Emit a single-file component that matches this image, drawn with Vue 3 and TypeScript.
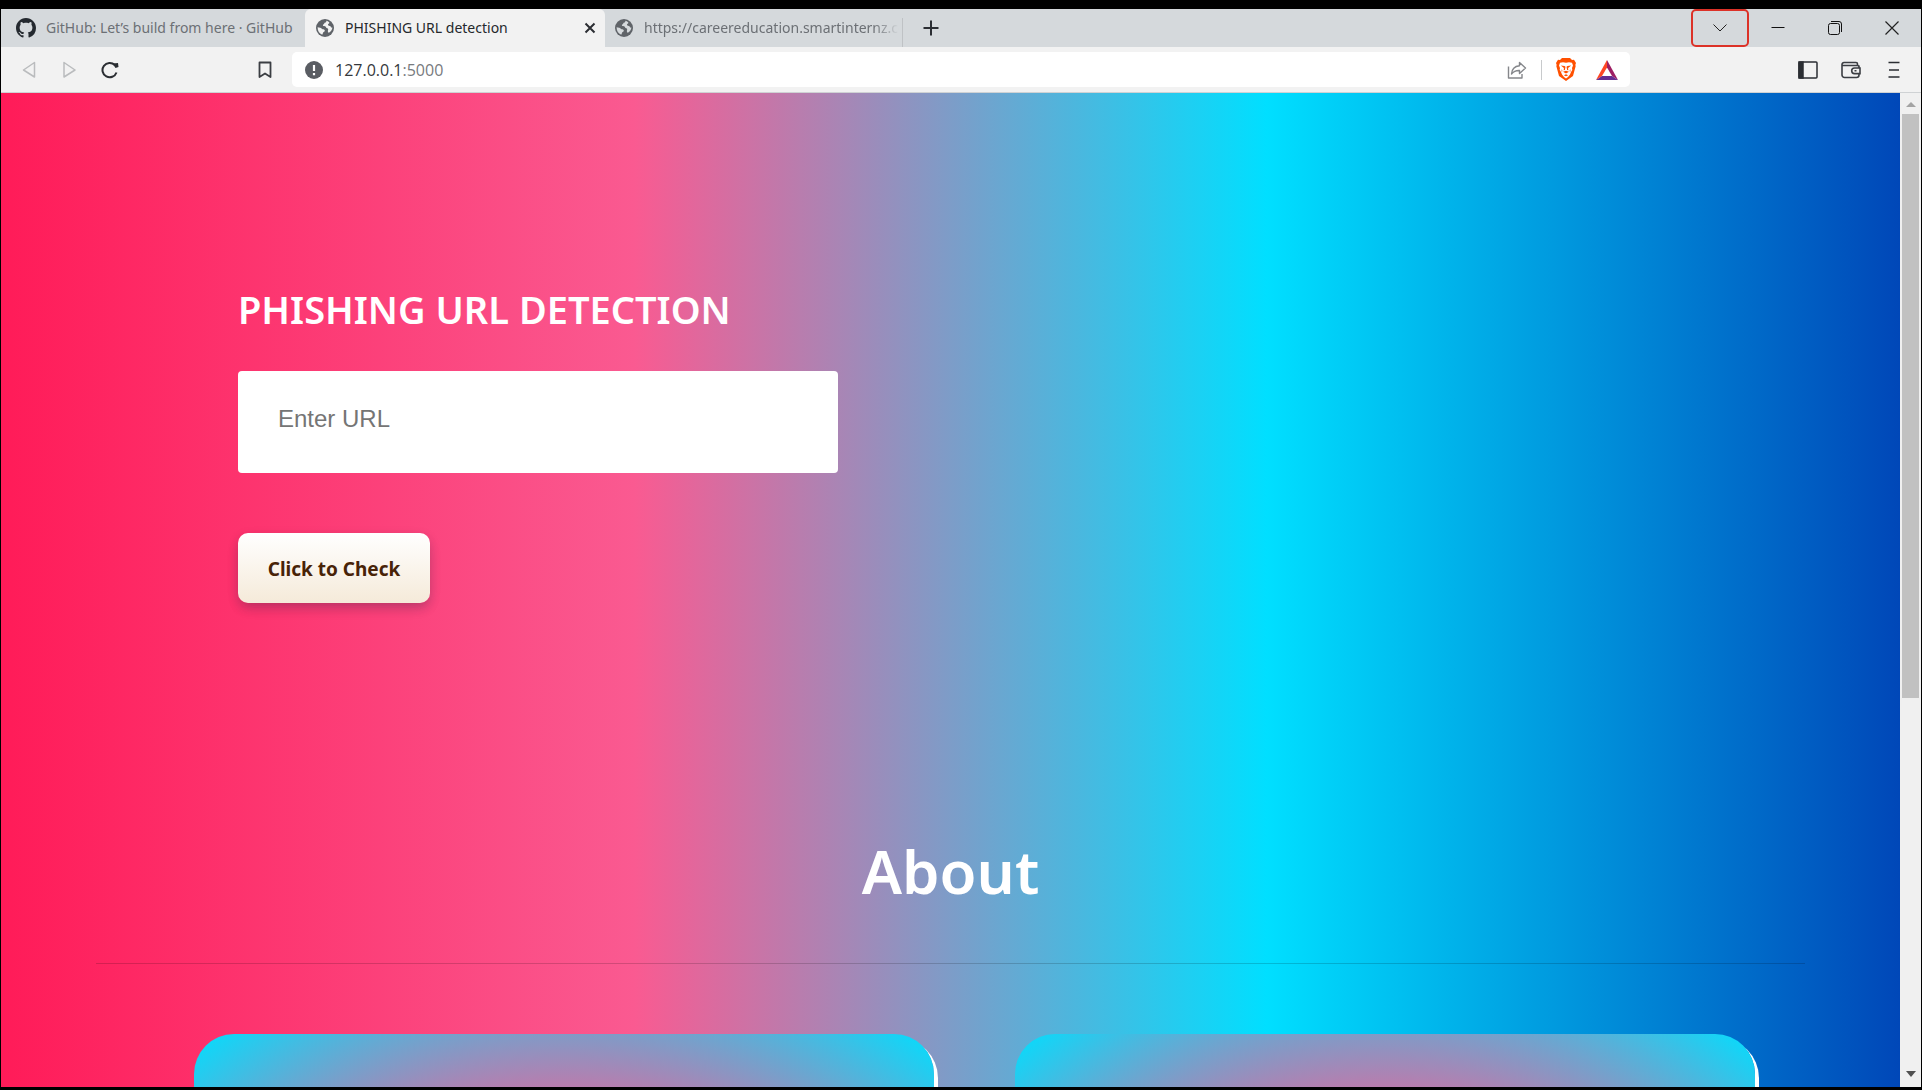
<script setup lang="ts">
import { ref } from 'vue'

interface Tab {
  title: string
  icon: 'github' | 'globe'
}

const tabs: Tab[] = [
  { title: 'GitHub: Let’s build from here · GitHub', icon: 'github' },
  { title: 'PHISHING URL detection', icon: 'globe' },
  { title: 'https://careereducation.smartinternz.com', icon: 'globe' },
]
const active = ref(1)
const url = ref('')
</script>

<template>
  <div class="window">
    <header class="tabstrip">
      <div class="tabs">
        <div v-for="(tab, i) in tabs" :key="tab.title" class="tab" :class="{ active: i === active }">
          <button class="tab-main" type="button" @click="active = i">
            <svg v-if="tab.icon === 'github'" class="fav" viewBox="0 0 16 16" fill="#24292f">
              <path d="M8 0C3.58 0 0 3.58 0 8c0 3.54 2.29 6.53 5.47 7.59.4.07.55-.17.55-.38 0-.19-.01-.82-.01-1.49-2.01.37-2.53-.49-2.69-.94-.09-.23-.48-.94-.82-1.13-.28-.15-.68-.52-.01-.53.63-.01 1.08.58 1.23.82.72 1.21 1.87.87 2.33.66.07-.52.28-.87.51-1.07-1.78-.2-3.64-.89-3.64-3.95 0-.87.31-1.59.82-2.15-.08-.2-.36-1.02.08-2.12 0 0 .67-.21 2.2.82.64-.18 1.32-.27 2-.27s1.36.09 2 .27c1.53-1.04 2.2-.82 2.2-.82.44 1.1.16 1.92.08 2.12.51.56.82 1.27.82 2.15 0 3.07-1.87 3.75-3.65 3.95.29.25.54.73.54 1.48 0 1.07-.01 1.93-.01 2.2 0 .21.15.46.55.38A8.01 8.01 0 0 0 16 8c0-4.42-3.58-8-8-8z" />
            </svg>
            <svg v-else class="fav" viewBox="0 0 20 20">
              <circle cx="10" cy="10" r="9" fill="#5f6368" />
              <path d="M2.6 9.2c2 .2 3.3.5 4.2 1.5.9.9 2.2.3 2.8 1.2.6.9-.2 1.7-1 2.2-.8.5-.6 1.8-1.4 2.6C4.300 15.500 2.500 13 2.600 9.200zM11.300 2.700c.2 1-.2 1.700-1.100 1.900-1 .2-.7 1.200-1.500 1.600-.7.4-1 .9-.6 1.500.5.6 1.700.1 2.400.7.8.7.6 1.700 1.700 1.900 1 .2 1.200 1 .8 1.900-.4 1.100.1 2.200.9 2.600 2-1.200 3.400-3 3.500-5.200-1 .2-1.500-.3-1.800-1.100-.4-.9-1.400-.6-2.200-1.100-.6-.5-.5-1.300.2-1.600.7-.3.8-.9.6-1.600-.9-.8-1.800-1.200-2.900-1.500z" :fill="i === active ? '#f2f2f2' : '#d5d9dc'" />
            </svg>
            <span class="tab-title">{{ tab.title }}</span>
          </button>
          <button v-if="i === active" class="tab-close" type="button" aria-label="Close tab">
            <svg width="12" height="12" viewBox="0 0 12 12" stroke="#2b2e33" stroke-width="2"><path d="M1.500 1.500l9 9M10.500 1.500l-9 9" /></svg>
          </button>
        </div>
      </div>
      <button class="new-tab" type="button" aria-label="New tab">
        <svg width="16" height="16" viewBox="0 0 16 16" stroke="#2b2e33" stroke-width="2"><path d="M8 .5v15M.5 8h15" /></svg>
      </button>
      <div class="win-controls">
        <button class="search-tabs" type="button" aria-label="Search tabs">
          <svg width="14" height="8" viewBox="0 0 14 8" fill="none" stroke="#222"><path d="M.5.500L7 7 13.500.500" /></svg>
        </button>
        <button type="button" aria-label="Minimize">
          <svg width="14" height="14" viewBox="0 0 14 14" stroke="#111"><path d="M.5 6.500h13" /></svg>
        </button>
        <button type="button" aria-label="Restore">
          <svg width="14" height="14" viewBox="0 0 14 14" fill="none" stroke="#111"><rect x=".5" y="2.500" width="11" height="11" rx="2" /><path d="M3 .500h8a2.500 2.500 0 0 1 2.500 2.500v8" /></svg>
        </button>
        <button type="button" aria-label="Close">
          <svg width="14" height="14" viewBox="0 0 14 14" stroke="#222" stroke-width="1.200"><path d="M.5.500l13 13M13.500.500l-13 13" /></svg>
        </button>
      </div>
    </header>

    <nav class="toolbar">
      <div class="nav-left">
        <button type="button" aria-label="Back">
          <svg width="16" height="18" viewBox="0 0 16 18" fill="none" stroke="#babcbe" stroke-width="1.500" stroke-linejoin="round"><path d="M13.500 1.500v14.500L2.500 9z" /></svg>
        </button>
        <button type="button" aria-label="Forward">
          <svg width="16" height="18" viewBox="0 0 16 18" fill="none" stroke="#babcbe" stroke-width="1.500" stroke-linejoin="round"><path d="M3 1.500v14.500l11-7z" /></svg>
        </button>
        <button type="button" aria-label="Reload">
          <svg width="18" height="18" viewBox="0 0 18 18" fill="none" stroke="#2b2e33" stroke-width="2"><path d="M13.800 4A7.200 7.200 0 1 0 15.500 11.500" /><path d="M11.500 2.500l5.500-.5.500 4-3 1z" fill="#2b2e33" stroke="none" /></svg>
        </button>
      </div>
      <button class="bookmark" type="button" aria-label="Bookmark">
        <svg width="14" height="18" viewBox="0 0 14 18" fill="none" stroke="#3b3e43" stroke-width="1.800" stroke-linejoin="round"><path d="M1.500 1.500h11v14.500L7 12.500 1.500 16z" /></svg>
      </button>
      <div class="address">
        <svg width="18" height="18" viewBox="0 0 18 18"><circle cx="9" cy="9" r="9" fill="#5a5d63" /><path d="M9 4v6M9 12v2.200" stroke="#fff" stroke-width="2.200" /></svg>
        <span class="url"><b>127.0.0.1</b>:5000</span>
        <button type="button" aria-label="Share">
          <svg width="20" height="18" viewBox="0 0 20 18" fill="none" stroke="#85878b" stroke-width="1.400" stroke-linejoin="round"><path d="M1.500 5.500v11.500h13.500v-4" /><path d="M12.500 1.500l6 5.500-6 5.500V9.500c-3.500-.2-6 1-8 3.500.3-4.500 3-7.800 8-8.300z" /></svg>
        </button>
        <i class="rule"></i>
        <button class="brave" type="button" aria-label="Brave Shields">
          <svg width="20" height="23" viewBox="0 0 20 23"><path d="M6 0h8l2 2 2-.2L20 5l-.7 2 .4 1-2.700 10L10 23 3 18 .3 8l.4-1L0 5l2-3.200L4 2z" fill="#ff5000" /><path d="M4 4.800l3-.6 3 .6 3-.6 3 .6 1 2.700-1 2.500.3 2-1.300 2-1 2.500-2 2.500-2 1.500-2-1.500-2-2.500-1-2.500-1.300-2 .3-2-1-2.500z" fill="#fff" /><path d="M4.800 7.500l3.700.4 1 .9-.6 3.200-1.200.3.200-2.300zM15.200 7.500l-3.700.4-1 .9.600 3.200 1.200.3-.2-2.300zM7 13.800l3-1 3 1-3 1.600zM7.800 17.300l2.200-1 2.200 1-2.200 1zM5.500 11l1 2-.8 1zM14.500 11l-1 2 .8 1z" fill="#ff5000" /></svg>
        </button>
        <button class="bat" type="button" aria-label="Brave Rewards">
          <svg width="22" height="20" viewBox="0 0 22 20"><path d="M11 0L0 20l6-4 5-8.500z" fill="#ff4724" /><path d="M11 0l11 20-6-4-5-8.500z" fill="#9e1f63" /><path d="M0 20h22l-6-4H6z" fill="#662d91" /></svg>
        </button>
      </div>
      <div class="nav-right">
        <button type="button" aria-label="Sidebar">
          <svg width="20" height="18" viewBox="0 0 20 18" fill="none" stroke="#2b2e33" stroke-width="1.500"><rect x="1" y="1" width="18" height="16" rx="1" /><path d="M1 1h4v16H1z" fill="#2b2e33" /></svg>
        </button>
        <button type="button" aria-label="Wallet">
          <svg width="20" height="18" viewBox="0 0 20 18" fill="none" stroke="#3b3e43" stroke-width="1.600"><path d="M18 7V4.500M16.500 4.500V3A1.500 1.500 0 0 0 15 1.500H3A2 2 0 0 0 1 3.500v10.500A2.500 2.500 0 0 0 3.500 16.500h12A2.500 2.500 0 0 0 18 14v-1M1 4.500h15.500a1.500 1.500 0 0 1 1.500 1.500" /><path d="M19 7h-5.500a2.800 2.800 0 0 0 0 5.600H19zM13.500 9.800h2" /></svg>
        </button>
        <button class="menu" type="button" aria-label="Menu">
          <svg width="12" height="18" viewBox="0 0 12 18" stroke="#2b2e33" stroke-width="1.600"><path d="M.5 1.500h11M1 9h10M.5 16h11" /></svg>
        </button>
      </div>
    </nav>

    <div class="viewport">
      <main class="page">
        <section class="hero">
          <h1>PHISHING URL DETECTION</h1>
          <form @submit.prevent>
            <input v-model="url" type="text" placeholder="Enter URL" aria-label="Enter URL" />
            <button type="submit">Click to Check</button>
          </form>
        </section>
        <section class="about">
          <h2>About</h2>
          <hr />
          <div class="cards">
            <article class="card"></article>
            <article class="card"></article>
          </div>
        </section>
      </main>
      <div class="scrollbar">
        <svg width="10" height="5" viewBox="0 0 10 5" fill="#a3a3a3"><path d="M0 5L5 0l5 5z" /></svg>
        <div class="track"><div class="thumb"></div></div>
        <svg width="10" height="6" viewBox="0 0 10 6" fill="#505050"><path d="M0 0h10L5 6z" /></svg>
      </div>
    </div>
  </div>
</template>

<style>
body {
  margin: 0;
  background: #000;
}
</style>

<style scoped>
* {
  box-sizing: border-box;
}
.window {
  height: 100vh;
  display: flex;
  flex-direction: column;
  padding: 9px 1px 3px;
  background: #000;
  font-family: "Noto Sans", "Open Sans", sans-serif;
  overflow: hidden;
}
button {
  border: 0;
  background: none;
  padding: 0;
  font: inherit;
  color: inherit;
}
svg {
  display: block;
  flex: none;
}
.tabstrip {
  flex: none;
  height: 38px;
  display: flex;
  align-items: stretch;
  background: #d5d9dc;
}
.tabs {
  display: flex;
}
.tab {
  width: 300px;
  display: flex;
  align-items: center;
  padding: 0 9px 0 10px;
  color: #6c7075;
  font-size: 14px;
}
.tab:first-child {
  width: 304px;
  padding-left: 15px;
  padding-right: 4px;
}
.tab:last-child {
  width: 298px;
  padding: 0 4px 0 9px;
  background: linear-gradient(#bfc2c5, #bfc2c5) right bottom / 1px 29px no-repeat;
}
.tab.active {
  background: #f2f2f2;
  color: #25282c;
  border-radius: 6px 6px 0 0;
}
.tab-main {
  flex: 1;
  min-width: 0;
  display: flex;
  align-items: center;
  gap: 10px;
}
.fav {
  width: 20px;
  height: 20px;
}
.tab-title {
  flex: 1;
  min-width: 0;
  line-height: 20px;
  text-align: left;
  white-space: nowrap;
  overflow: hidden;
}
.tab:last-child .tab-title {
  mask-image: linear-gradient(to right, #000 90%, transparent);
}
.new-tab {
  width: 56px;
  display: grid;
  place-items: center;
}
.win-controls {
  margin-left: auto;
  padding-right: 1px;
  display: flex;
}
.win-controls button {
  width: 57px;
  display: grid;
  place-items: center;
}
.win-controls .search-tabs {
  width: 58px;
  border: 2px solid #dc3228;
  border-radius: 5px;
}
.toolbar {
  flex: none;
  height: 46px;
  display: flex;
  align-items: center;
  background: #f2f2f2;
  border-bottom: 1px solid #cfd2d4;
}
.nav-left {
  display: flex;
  gap: 24px;
  padding-left: 20px;
}
.bookmark {
  margin-left: 139px;
}
.address {
  flex: 1;
  height: 35px;
  margin: 0 168px 0 20px;
  padding: 0 12px 0 13px;
  display: flex;
  align-items: center;
  background: #fff;
  border-radius: 5px;
}
.url {
  flex: 1;
  margin-left: 12px;
  font-family: "Open Sans", sans-serif;
  font-size: 16px;
  line-height: 22px;
  color: #777a7e;
}
.url b {
  font-weight: 400;
  color: #35383c;
}
.rule {
  width: 1px;
  height: 20px;
  margin: 0 14px;
  background: #c8cacc;
}
.bat {
  margin-left: 20px;
}
.nav-right {
  display: flex;
  align-items: center;
  gap: 23px;
  padding-right: 21px;
}
.menu {
  padding-left: 4px;
}
.viewport {
  flex: 1;
  min-height: 0;
  display: flex;
}
.page {
  flex: 1;
  min-width: 0;
  overflow: hidden;
  color: #fff;
  background: linear-gradient(to right, #ff1b58, #fa5a91 33.33%, #00dfff 66.66%, #0047b8);
}
.hero {
  padding: 188px 0 0 237px;
}
h1 {
  margin: 0;
  font-size: 38px;
  line-height: 56px;
  font-weight: 600;
}
form {
  display: flex;
  flex-direction: column;
  align-items: flex-start;
  gap: 60px;
  margin-top: 34px;
}
input {
  width: 600px;
  height: 102px;
  padding: 0 40px 7px;
  border: 0;
  border-radius: 4px;
  background: #fff;
  font-family: "Liberation Sans", Arial, sans-serif;
  font-size: 24px;
}
input::placeholder {
  color: #757575;
}
form button {
  height: 70px;
  width: 192px;
  padding-top: 2px;
  border-radius: 10px;
  background: linear-gradient(#fff, #f5ead9);
  box-shadow: 0 4px 11px rgba(45, 35, 66, 0.18), 0 7px 13px -3px rgba(45, 35, 66, 0.18);
  color: #482307;
  font-size: 19px;
  font-weight: 700;
}
.about {
  padding: 223px 5% 0;
}
h2 {
  margin: 0;
  font-size: 60px;
  line-height: 90px;
  font-weight: 600;
  text-align: center;
}
hr {
  margin: 47px 0 0;
  border: 0;
  height: 1px;
  background: rgba(0, 0, 0, 0.16);
}
.cards {
  display: grid;
  grid-template-columns: 1fr 1fr;
  gap: 81px;
  margin: 70px 50px 0 98px;
}
.card {
  height: 960px;
  border-radius: 40px;
  background: radial-gradient(circle, #ff1b58, #fa5a91 60%, #00dfff);
  box-shadow: 4px 4px 0 #fff;
}
.scrollbar {
  width: 21px;
  flex: none;
  display: flex;
  flex-direction: column;
  align-items: center;
  padding: 9px 0 10px;
  background: #f0f0f0;
}
.track {
  flex: 1;
  width: 17px;
  padding: 7px 0 0;
}
.thumb {
  height: 61%;
  background: #c1c1c1;
}
</style>
